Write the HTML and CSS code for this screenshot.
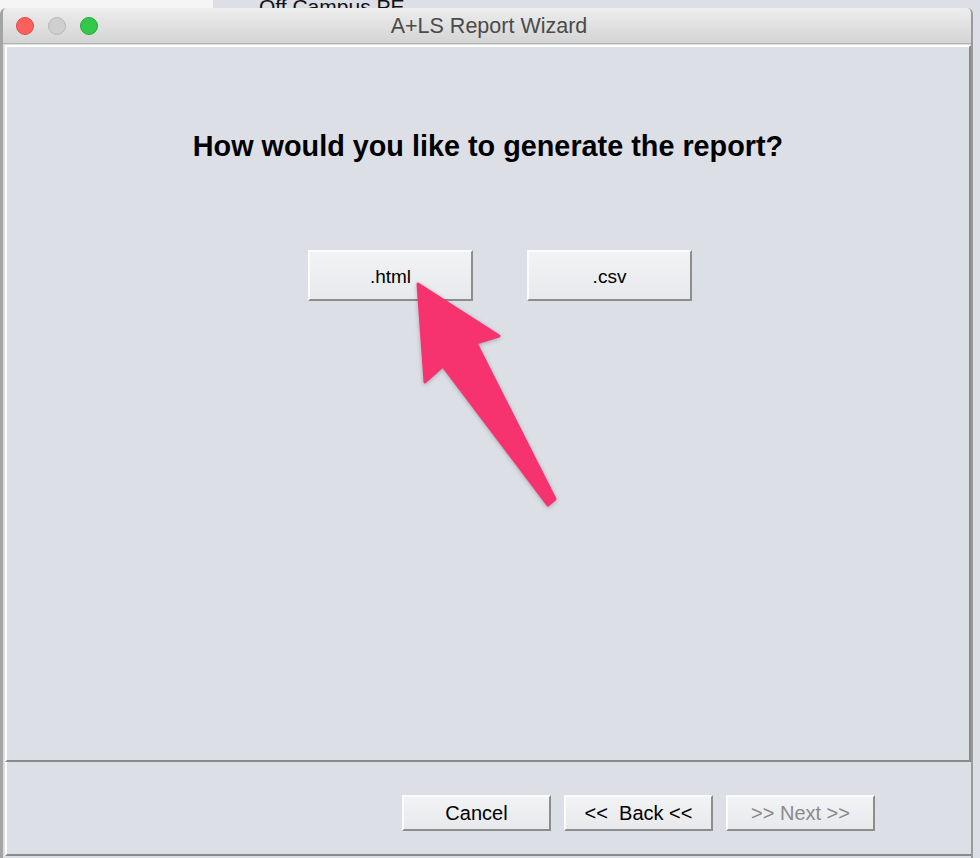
FILE: index.html
```html
<!DOCTYPE html>
<html lang="en">
<head>
    <meta charset="UTF-8">
    <meta name="viewport" content="width=device-width, initial-scale=1.0">
    <title>A+LS Report Wizard</title>
    <link rel="stylesheet" href="styles.css">
</head>
<body>
    <div class="desktop">
        <span class="behind">Off Campus PE</span>
    </div>

    <div class="window">
        <div class="titlebar">
            <div class="lights">
                <span class="light close"></span>
                <span class="light minimize"></span>
                <span class="light zoom"></span>
            </div>
            <div class="title">A+LS Report Wizard</div>
            <div></div>
        </div>

        <div class="content">
            <div class="panel main">
                <h1>How would you like to generate the report?</h1>
                <div class="options">
                    <button class="btn option">.html</button>
                    <button class="btn option">.csv</button>
                </div>
            </div>
            <div class="panel footer">
                <button class="btn nav">Cancel</button>
                <button class="btn nav">&lt;&lt;&nbsp; Back &lt;&lt;</button>
                <button class="btn nav disabled">&gt;&gt; Next &gt;&gt;</button>
            </div>
        </div>
    </div>

    <!-- annotation arrow pointing at the .html button -->
    <svg class="arrow" width="980" height="858" viewBox="0 0 980 858">
        <path d="M418 284 L499 336 L476 343 L555 499 L548 505 L443 366 L425 382 Z"
              fill="#f6336f" stroke="#f6336f" stroke-width="3" stroke-linejoin="round"/>
    </svg>
</body>
</html>
```

FILE: styles.css
```css
body {
    margin: 0;
    position: relative;
    font-family: "Liberation Sans", Arial, sans-serif;
    background: linear-gradient(to right, #f5f5f5 213px, #dcdfe5 213px);
    height: 858px;
    overflow: hidden;
}
.desktop {
    height: 8px;
    overflow: hidden;
    padding-left: 259px;
}
.behind {
    display: block;
    margin-top: -4px;
    font-size: 21px;
    line-height: 1;
    color: #111;
}
.window {
    width: 973px;
    box-sizing: border-box;
    height: 850px;
    background: #dcdfe6;
    border-radius: 6px 6px 0 0;
    border-left: 3px solid #a4a4a4;
    border-right: 2px solid #9a9a9a;
    overflow: hidden;
}
.titlebar {
    height: 35px;
    display: grid;
    grid-template-columns: 1fr auto 1fr;
    align-items: center;
    background: linear-gradient(#ededed, #d4d4d4);
    border-bottom: 1px solid #b1b1b1;
}
.lights {
    display: flex;
    gap: 14px;
    padding-left: 13px;
}
.light {
    width: 16px;
    height: 16px;
    border-radius: 50%;
    border: 1px solid;
}
.close {
    background: #fc605c;
    border-color: #de4b46;
}
.minimize {
    background: #cfcfcf;
    border-color: #b9b9b9;
}
.zoom {
    background: #34c84a;
    border-color: #28a83b;
}
.title {
    font-size: 21.5px;
    color: #4b4b4b;
    padding: 1px 0 0 4px;
}
.content {
    padding: 1px 0 0 2px;
}
.panel {
    box-sizing: border-box;
    border: 2px solid;
    border-color: #ffffff #8a8a8a #8a8a8a #ffffff;
}
.main {
    height: 717px;
    padding-top: 82px;
}
h1 {
    margin: 0;
    text-align: center;
    font-size: 28.8px;
    line-height: 34px;
    font-weight: bold;
    color: #000;
}
.options {
    display: flex;
    justify-content: center;
    gap: 54px;
    margin-top: 87px;
    padding-left: 24px;
}
.btn {
    font-family: "Liberation Sans", Arial, sans-serif;
    color: #000;
    background: linear-gradient(#f2f3f5, #e8e9ec);
    border: 2px solid;
    border-color: #fbfbfb #8d8d8d #8d8d8d #fbfbfb;
    padding: 0;
}
.option {
    width: 165px;
    height: 51px;
    font-size: 19px;
    padding-top: 2px;
}
.footer {
    height: 94px;
    border-top: none;
    border-right: none;
    display: flex;
    justify-content: flex-end;
    align-items: flex-start;
    gap: 13px;
    padding: 33px 96px 0 0;
}
.nav {
    width: 149px;
    height: 36px;
    font-size: 20px;
}
.disabled {
    color: #8a8a8a;
}
.arrow {
    position: absolute;
    top: 0;
    left: 0;
    pointer-events: none;
    filter: drop-shadow(0 1px 2px rgba(0, 0, 0, 0.25));
}
```
